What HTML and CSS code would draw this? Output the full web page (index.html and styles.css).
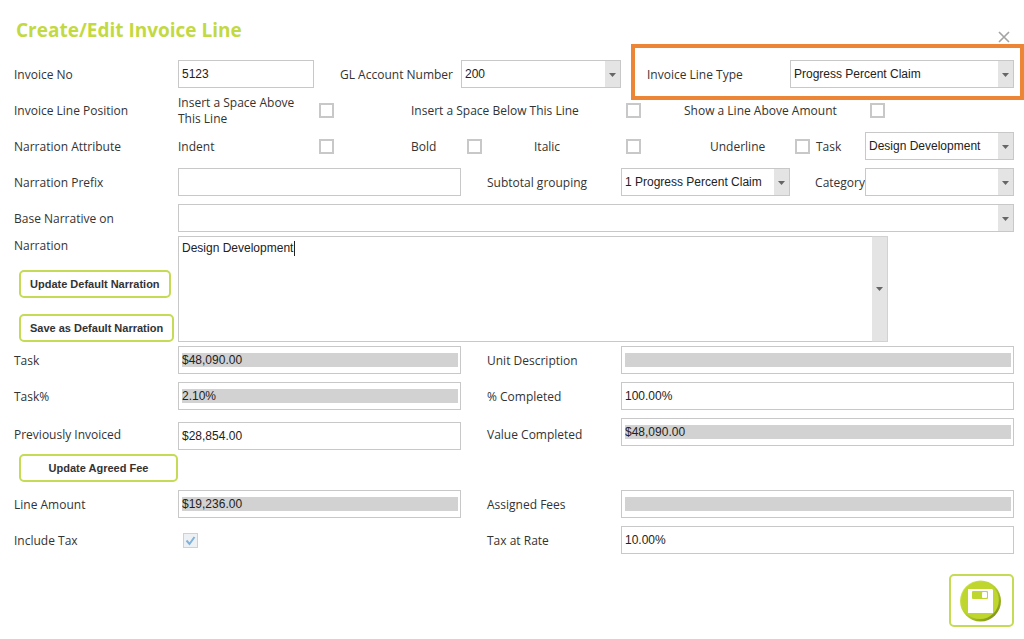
FILE: index.html
```
<!DOCTYPE html>
<html lang="en">
<head>
    <meta charset="utf-8">
    <title>Create/Edit Invoice Line</title>
    <link rel="stylesheet" href="styles.css">
</head>
<body>
    <form class="invoice-form">
        <div class="form-header">
            <h1>Create/Edit Invoice Line</h1>
            <button type="button" class="close-button" aria-label="Close">
                <svg width="12" height="12" viewBox="0 0 12 12"><path d="M1 1L11 11M11 1L1 11" stroke="#a3a3a3" stroke-width="1.6"/></svg>
            </button>
        </div>

        <div class="form-group">
            <div class="row row-type">
                <label for="invoice-no">Invoice No</label>
                <input type="text" id="invoice-no" value="5123">
                <label for="gl-account" class="gl-label">GL Account Number</label>
                <select id="gl-account"><option>200</option></select>
                <div class="highlight">
                    <label for="line-type">Invoice Line Type</label>
                    <select id="line-type"><option>Progress Percent Claim</option></select>
                </div>
            </div>

            <div class="row row-position">
                <span>Invoice Line Position</span>
                <label for="space-above" class="wrap-label">Insert a Space Above This Line</label>
                <input type="checkbox" id="space-above">
                <label for="space-below">Insert a Space Below This Line</label>
                <input type="checkbox" id="space-below">
                <label for="line-above">Show a Line Above Amount</label>
                <input type="checkbox" id="line-above">
            </div>

            <div class="row row-attribute">
                <span>Narration Attribute</span>
                <label for="indent">Indent</label>
                <input type="checkbox" id="indent">
                <label for="bold">Bold</label>
                <input type="checkbox" id="bold">
                <label for="italic">Italic</label>
                <input type="checkbox" id="italic">
                <label for="underline">Underline</label>
                <input type="checkbox" id="underline">
                <label for="task">Task</label>
                <select id="task"><option>Design Development</option></select>
            </div>

            <div class="row row-prefix">
                <label for="prefix">Narration Prefix</label>
                <input type="text" id="prefix">
                <label for="grouping" class="second-label">Subtotal grouping</label>
                <select id="grouping"><option>1 Progress Percent Claim</option></select>
                <label for="category" class="category-label">Category</label>
                <select id="category"><option></option></select>
            </div>

            <div class="row row-base">
                <label for="base">Base Narrative on</label>
                <select id="base"><option></option></select>
            </div>
        </div>

        <div class="row row-narration">
            <div class="narration-side">
                <label for="narration">Narration</label>
                <button type="button" class="outline-button">Update Default Narration</button>
                <button type="button" class="outline-button">Save as Default Narration</button>
            </div>
            <div class="narration-box">
                <textarea id="narration">Design Development</textarea>
                <button type="button" class="drop-button" aria-label="Choose narration"></button>
            </div>
        </div>

        <div class="form-group">
            <div class="row row-pair">
                <label for="task-amount">Task</label>
                <input type="text" id="task-amount" value="$48,090.00" readonly>
                <label for="unit" class="second-label">Unit Description</label>
                <input type="text" id="unit" readonly>
            </div>
            <div class="row row-pair">
                <label for="task-percent">Task%</label>
                <input type="text" id="task-percent" value="2.10%" readonly>
                <label for="completed" class="second-label">% Completed</label>
                <input type="text" id="completed" value="100.00%">
            </div>
            <div class="row row-pair row-previous">
                <label for="previous">Previously Invoiced</label>
                <input type="text" id="previous" value="$28,854.00">
                <label for="value-completed" class="second-label">Value Completed</label>
                <input type="text" id="value-completed" value="$48,090.00" readonly>
            </div>
        </div>

        <div class="fee-actions">
            <button type="button" class="outline-button fee-button">Update Agreed Fee</button>
        </div>

        <div class="form-group fees">
            <div class="row row-pair">
                <label for="line-amount">Line Amount</label>
                <input type="text" id="line-amount" value="$19,236.00" readonly>
                <label for="assigned" class="second-label">Assigned Fees</label>
                <input type="text" id="assigned" readonly>
            </div>
            <div class="row row-pair">
                <label for="include-tax">Include Tax</label>
                <input type="checkbox" id="include-tax" class="tax-check" checked disabled>
                <label for="tax-rate" class="second-label">Tax at Rate</label>
                <input type="text" id="tax-rate" value="10.00%">
            </div>
        </div>

        <div class="form-footer">
            <button type="submit" class="save-button" aria-label="Save">
                <svg width="44" height="44" viewBox="0 0 44 44">
                    <defs>
                        <linearGradient id="rim" x1="0" y1="0" x2="1" y2="1">
                            <stop offset="0" stop-color="#d9ec62"/>
                            <stop offset="0.5" stop-color="#b5cf2a"/>
                            <stop offset="1" stop-color="#6f8410"/>
                        </linearGradient>
                    </defs>
                    <circle cx="20.5" cy="22" r="20.5" fill="url(#rim)"/>
                    <circle cx="20" cy="21.3" r="18.8" fill="#bfd62f"/>
                    <path d="M8 10H32L33 11V34H8Z" fill="#fff"/>
                    <rect x="12" y="12" width="16" height="8" rx="1" fill="#bfd62f"/>
                    <rect x="22" y="13" width="5" height="6" rx="1" fill="#fff"/>
                </svg>
            </button>
        </div>
    </form>
</body>
</html>
```
FILE: styles.css
```
* {
    box-sizing: border-box;
}
body {
    margin: 0;
    background-color: #fff;
    color: #333;
    font-family: "Open Sans", "Noto Sans", sans-serif;
    font-size: 12px;
    line-height: 16px;
}
.invoice-form {
    display: flex;
    flex-direction: column;
    gap: 4px;
    padding: 0 10px 12px 14px;
}
.form-header {
    display: flex;
    justify-content: space-between;
    height: 56px;
}
h1 {
    margin: 0;
    padding: 16px 2px 0;
    font-size: 19px;
    line-height: 28px;
    color: #c3d941;
}
.close-button {
    display: flex;
    align-self: flex-start;
    margin-top: 31px;
    padding: 0 4px;
    border: none;
    background: none;
    cursor: pointer;
}
.form-group {
    display: flex;
    flex-direction: column;
    gap: 8px;
}
.row {
    display: grid;
    align-items: center;
    min-height: 28px;
}
.row label,
.row span {
    padding-top: 1px;
}
.row-type {
    grid-template-columns: 164px 136fr 147fr 160fr 393fr;
}
.row-position {
    grid-template-columns: 164px 141fr 92fr 215fr 58fr 186fr 144fr;
}
.row-attribute {
    grid-template-columns: 164px 141fr 92fr 56fr 67fr 92fr 84fr 85fr 21fr 49fr 149fr;
}
.row-prefix {
    grid-template-columns: 164px 283fr 160fr 169fr 75fr 149fr;
}
.row-base {
    grid-template-columns: 164px 1fr;
}
.row-narration {
    grid-template-columns: 164px 710fr 126fr;
}
.row-pair {
    grid-template-columns: 164px 283fr 160fr 393fr;
}
.gl-label,
.second-label {
    padding-left: 26px;
}
.category-label {
    text-align: right;
}
.wrap-label {
    max-width: 124px;
    margin: -3px 0;
}
input[type="text"],
select,
textarea {
    width: 100%;
    min-width: 0;
    height: 28px;
    margin: 0;
    padding: 0 3px;
    border: 1px solid #c8c8c8;
    border-radius: 0;
    background-color: #fff;
    color: #222;
    font-family: "Liberation Sans", Arial, sans-serif;
    font-size: 12px;
    outline: none;
}
input[type="text"]:read-only {
    padding: 6px 2px 6px 3px;
    background-color: #d2d2d2;
    background-clip: content-box;
}
select {
    appearance: none;
    padding-right: 16px;
    background-image: url("data:image/svg+xml,%3Csvg xmlns='http://www.w3.org/2000/svg' width='15' height='26'%3E%3Cpath d='M4 12h7l-3.500 4z' fill='%23666'/%3E%3C/svg%3E"), linear-gradient(#e4e4e4, #e4e4e4);
    background-position: right center;
    background-size: 15px 26px, 15px 100%;
    background-repeat: no-repeat;
}
input[type="checkbox"] {
    appearance: none;
    width: 15px;
    height: 15px;
    margin: 0;
    border: 2px solid #c8c8c8;
    background-color: #fff;
}
.tax-check[type="checkbox"] {
    margin-left: 5px;
    border: 1px solid #d0d0d0;
    background: #eef1f4 url("data:image/svg+xml,%3Csvg xmlns='http://www.w3.org/2000/svg' width='13' height='13'%3E%3Cpath d='M2.500 6.500l3 3.500 5-7' fill='none' stroke='%237fb2dc' stroke-width='2'/%3E%3C/svg%3E") center no-repeat;
}
.highlight {
    display: grid;
    grid-template-columns: 143fr 224fr;
    align-items: center;
    margin: -16px -10px -12px 10px;
    padding: 12px 6px 8px 12px;
    border: 4px solid #ed8536;
}
.narration-side {
    display: flex;
    flex-direction: column;
    align-items: flex-start;
    align-self: start;
    gap: 16px;
    padding-top: 1px;
}
.outline-button {
    height: 28px;
    margin-left: 5px;
    padding: 0 9px;
    border: 2px solid #c5da55;
    border-radius: 5px;
    background-color: #fff;
    color: #333;
    font-family: "Liberation Sans", Arial, sans-serif;
    font-size: 11px;
    font-weight: bold;
    white-space: nowrap;
    cursor: pointer;
}
.narration-box {
    display: flex;
    height: 106px;
}
/* text cursor after the last word */
.narration-box textarea {
    flex: 1;
    height: 106px;
    padding: 4px 3px;
    border-right: none;
    line-height: 15px;
    resize: none;
    background-image: linear-gradient(#222, #222);
    background-position: 115px 4px;
    background-size: 1px 15px;
    background-repeat: no-repeat;
}
.drop-button {
    width: 16px;
    padding: 0;
    border: 1px solid #d2d2d2;
    border-left: none;
    background: #e4e4e4 url("data:image/svg+xml,%3Csvg xmlns='http://www.w3.org/2000/svg' width='7' height='4'%3E%3Cpath d='M0 0h7l-3.500 4z' fill='%23666'/%3E%3C/svg%3E") center no-repeat;
}
.row-previous {
    min-height: 32px;
}
.row-previous #previous {
    align-self: end;
}
.row-previous #value-completed {
    align-self: start;
}
.fee-actions {
    display: flex;
    width: 164px;
}
.fee-button {
    flex: 1;
}
.fees {
    padding-top: 4px;
}
.form-footer {
    display: flex;
    justify-content: flex-end;
    padding-top: 16px;
}
.save-button {
    display: flex;
    align-items: center;
    justify-content: center;
    width: 65px;
    height: 53px;
    padding: 0;
    border: 2px solid #c5da55;
    border-radius: 5px;
    background-color: #fff;
    cursor: pointer;
}
```
